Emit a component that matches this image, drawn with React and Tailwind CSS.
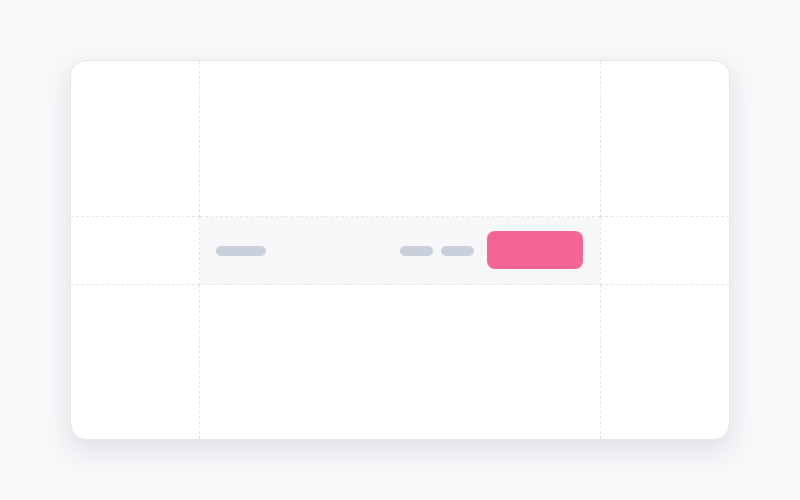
export default function App() {
    const line = 'border-dashed border-[#e3e6eb]';

    return (
        <div className="w-[800px] h-[500px] bg-[#f7f8fa] pt-[60px] pl-[70px]">
            <div className="w-[660px] h-[380px] bg-white rounded-2xl border border-[#e2e5e9] shadow-[0_10px_28px_rgba(15,23,42,0.11)] overflow-hidden grid grid-cols-[129px_1fr_129px] grid-rows-[156px_68px_1fr]">
                <div className={`border-r border-b ${line}`} />
                <div className={`border-b ${line}`} />
                <div className={`border-l border-b ${line}`} />

                <div className={`border-r border-b ${line}`} />
                <div className={`border-b ${line} bg-[#f7f7fa] rounded-[3px] flex items-center pl-4 pr-[17px] pb-[2px]`}>
                    <div className="w-[50px] h-[10px] mt-0.5 rounded-full bg-[#c9d0dc]" />
                    <div className="flex-1" />
                    <div className="w-[33px] h-[10px] mt-0.5 rounded-full bg-[#c9d0dc]" />
                    <div className="w-[33px] h-[10px] mt-0.5 rounded-full bg-[#c9d0dc] ml-2" />
                    <div className="w-[96px] h-[38px] rounded-lg bg-[#f36596] ml-[13px]" />
                </div>
                <div className={`border-l border-b ${line}`} />

                <div className={`border-r ${line}`} />
                <div />
                <div className={`border-l ${line}`} />
            </div>
        </div>
    );
}
